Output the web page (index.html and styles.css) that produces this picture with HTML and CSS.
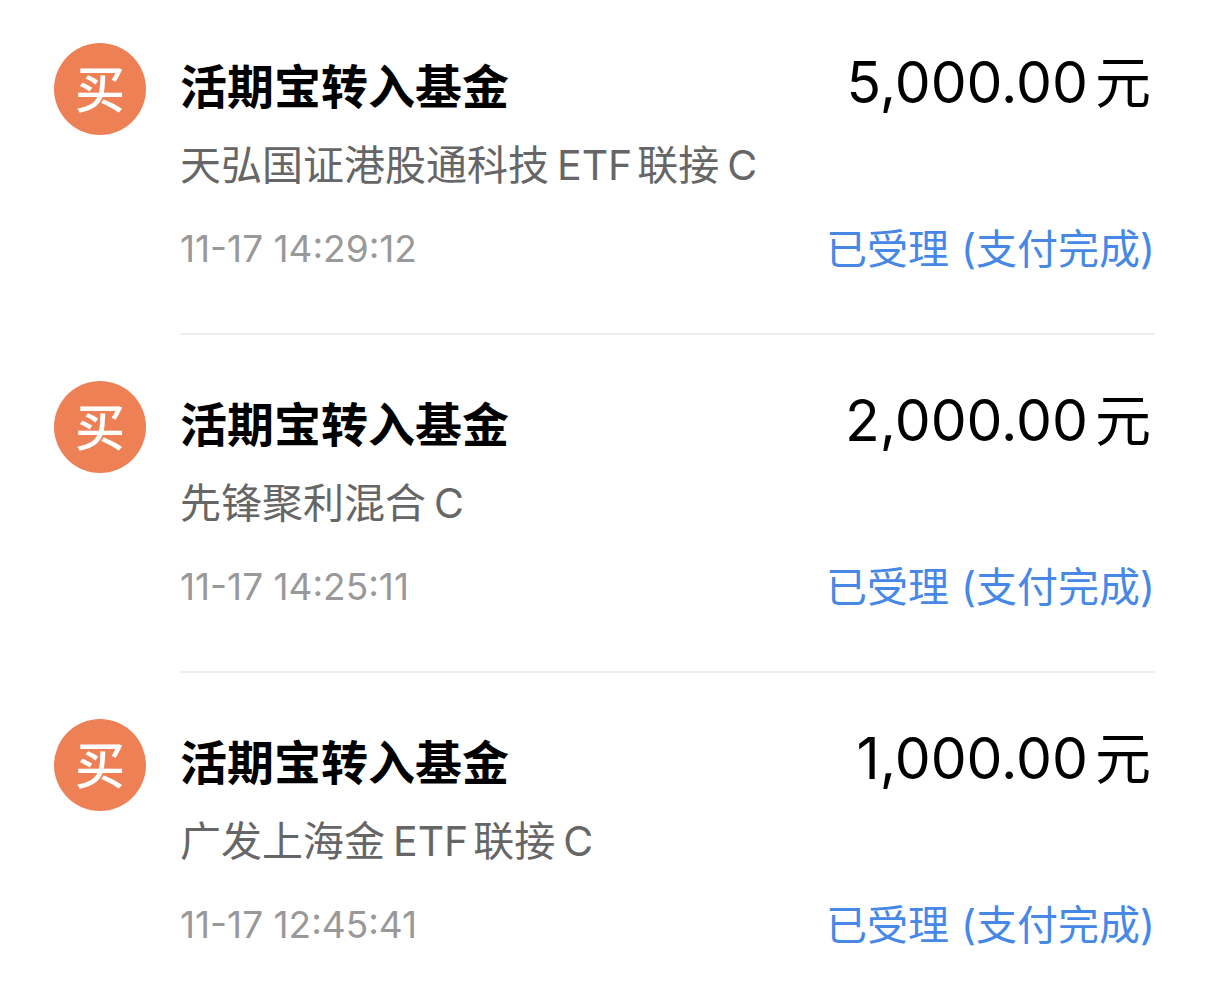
FILE: index.html
```html
<!DOCTYPE html>
<html lang="zh-CN">
<head>
<meta charset="utf-8">
<meta name="viewport" content="width=device-width, initial-scale=1">
<title>交易记录</title>
<link rel="stylesheet" href="styles.css">
</head>
<body>
<ul class="records">
  <li class="record">
    <span class="badge">买</span>
    <div class="body">
      <div class="head"><h2 class="title">活期宝转入基金</h2><p class="amount">5,000.00<span class="unit">元</span></p></div>
      <p class="fund">天弘国证港股通科技<span class="latin">ETF</span>联接<span class="latin">C</span></p>
      <div class="foot"><time class="time">11-17 14:29:12</time><span class="status">已受理<span class="paid">(支付完成)</span></span></div>
    </div>
  </li>
  <li class="record">
    <span class="badge">买</span>
    <div class="body">
      <div class="head"><h2 class="title">活期宝转入基金</h2><p class="amount">2,000.00<span class="unit">元</span></p></div>
      <p class="fund">先锋聚利混合<span class="latin">C</span></p>
      <div class="foot"><time class="time">11-17 14:25:11</time><span class="status">已受理<span class="paid">(支付完成)</span></span></div>
    </div>
  </li>
  <li class="record">
    <span class="badge">买</span>
    <div class="body">
      <div class="head"><h2 class="title">活期宝转入基金</h2><p class="amount">1,000.00<span class="unit">元</span></p></div>
      <p class="fund">广发上海金<span class="latin">ETF</span>联接<span class="latin">C</span></p>
      <div class="foot"><time class="time">11-17 12:45:41</time><span class="status">已受理<span class="paid">(支付完成)</span></span></div>
    </div>
  </li>
</ul>
</body>
</html>
```
FILE: styles.css
```css
* {
  box-sizing: border-box;
  margin: 0;
  padding: 0;
}

body {
  background: #fff;
  color: #000;
  font-family: Inter, "Noto Sans CJK SC", sans-serif;
  text-autospace: no-autospace;
}

.records {
  list-style: none;
  padding: 43px 51px 0 54px;
}

.record {
  display: flex;
  gap: 34px;
}

.record + .record {
  padding-top: 46px;
}

.badge {
  flex: none;
  width: 92px;
  height: 92px;
  border-radius: 50%;
  background: #ee8056;
  color: #fff;
  font-family: "Noto Sans CJK SC", sans-serif;
  font-size: 50px;
  font-weight: 500;
  line-height: 86px;
  text-align: center;
}

.body {
  flex: 1;
  min-width: 0;
}

.record:not(:last-child) .body {
  padding-bottom: 34px;
  border-bottom: 2px solid #eee;
}

.head,
.foot {
  display: flex;
  justify-content: space-between;
  white-space: nowrap;
}

.title {
  font-size: 47px;
  font-weight: 700;
  line-height: 88px;
}

.amount {
  padding-right: 4px;
  font-size: 57px;
  line-height: 80px;
}

.unit {
  margin-left: 7px;
  font-size: 56px;
}

.fund {
  color: #666;
  font-size: 41px;
  line-height: 68px;
}

.latin {
  margin: 0 5px 0 8px;
}

.foot {
  line-height: 100px;
}

.time {
  color: #999;
  font-size: 37px;
}

.status {
  color: #4788e6;
  font-size: 41px;
}

.paid {
  margin-left: 12px;
}
```
